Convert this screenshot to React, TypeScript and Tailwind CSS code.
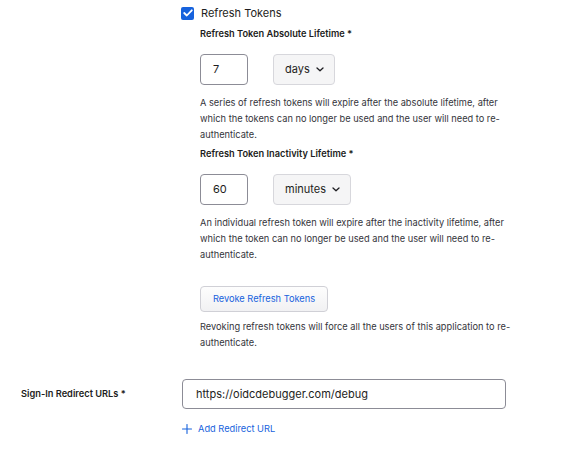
import React from "react";

function Chevron() {
  return (
    <svg width="8" height="5" viewBox="0 0 8 5" fill="none" className="ml-[6px]">
      <path d="M1 1L4 3.8L7 1" stroke="#1d1d21" strokeWidth="1.3" strokeLinecap="round" strokeLinejoin="round" />
    </svg>
  );
}

function NumberRow({ value, unit, selectW }: { value: string; unit: string; selectW: string }) {
  return (
    <div className="flex items-center gap-[25px]">
      <div className="w-[48px] h-[31px] border border-[#8c8c96] rounded-[4px] flex items-center pl-[12px] text-[11px] text-[#1d1d21]">
        {value}
      </div>
      <div className={`${selectW} h-[31px] border border-[#d7d7dc] rounded-[4px] bg-[#f5f5f6] flex items-center pl-[11px] text-[11px] text-[#1d1d21]`}>
        {unit}
        <Chevron />
      </div>
    </div>
  );
}

export default function App() {
  return (
    <div className="w-[576px] h-[450px] bg-white font-['Inter',sans-serif] text-[#1d1d21] overflow-hidden">
      <div className="pl-[181px] h-[26px] flex items-center gap-[7px]">
        <div className="w-[13px] h-[13px] rounded-[2px] bg-[#1662dd] flex items-center justify-center">
          <svg width="10" height="8" viewBox="0 0 10 8" fill="none">
            <path d="M1.2 4L3.8 6.5L8.8 1.3" stroke="white" strokeWidth="1.8" strokeLinecap="round" strokeLinejoin="round" />
          </svg>
        </div>
        <span className="text-[11px]">Refresh Tokens</span>
      </div>
      <div className="pl-[200px]">
        <div className="h-[16px] leading-[16px] text-[9.25px] font-semibold">Refresh Token Absolute Lifetime *</div>
        <div className="mt-[12px]">
          <NumberRow value="7" unit="days" selectW="w-[62px]" />
        </div>
        <p className="mt-[10px] w-[316px] text-[9.25px] leading-[16px] text-[#34343a]">
          A series of refresh tokens will expire after the absolute lifetime, after which the tokens can no longer be used and the user will need to re-authenticate.
        </p>
        <div className="mt-[3px] h-[16px] leading-[16px] text-[9.25px] font-semibold">Refresh Token Inactivity Lifetime *</div>
        <div className="mt-[12px]">
          <NumberRow value="60" unit="minutes" selectW="w-[78px]" />
        </div>
        <p className="mt-[10px] w-[316px] text-[9.25px] leading-[16px] text-[#34343a]">
          An individual refresh token will expire after the inactivity lifetime, after which the token can no longer be used and the user will need to re-authenticate.
        </p>
        <button className="mt-[23px] w-[128px] h-[26px] border border-[#d0d0d6] rounded-[4px] bg-gradient-to-b from-[#fdfdfd] to-[#f1f1f3] text-[9.25px] text-[#1662dd] flex items-center justify-center">
          Revoke Refresh Tokens
        </button>
        <p className="mt-[7px] w-[316px] text-[9.25px] leading-[16px] text-[#34343a]">
          Revoking refresh tokens will force all the users of this application to re-authenticate.
        </p>
      </div>
      <div className="mt-[28px] flex items-center">
        <div className="w-[182px] pl-[21px] text-[9.25px] font-semibold">Sign-In Redirect URLs *</div>
        <div className="w-[324px] h-[30px] border border-[#8c8c96] rounded-[4px] flex items-center pl-[13px] text-[11px]">
          https://oidcdebugger.com/debug
        </div>
      </div>
      <div className="mt-[12px] pl-[182px] flex items-center gap-[6px] h-[16px] text-[9.25px] text-[#1662dd]">
        <svg width="10" height="10" viewBox="0 0 10 10" fill="none">
          <path d="M5 0.5V9.5M0.5 5H9.5" stroke="#1662dd" strokeWidth="1.1" strokeLinecap="round" />
        </svg>
        Add Redirect URL
      </div>
    </div>
  );
}
